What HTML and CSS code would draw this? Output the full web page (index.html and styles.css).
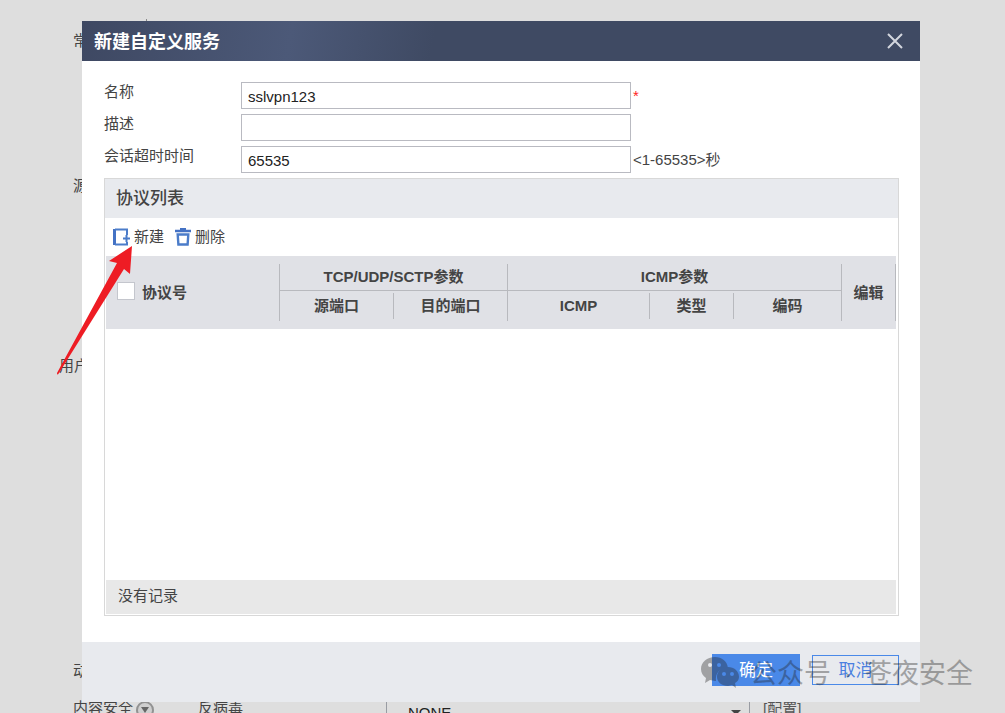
FILE: index.html
```html
<!DOCTYPE html>
<html lang="zh-CN">
<head>
<meta charset="utf-8">
<title>新建自定义服务</title>
<link rel="stylesheet" href="styles.css">
</head>
<body>
<main class="page">
  <div class="page-divider"></div>
  <section class="section section-general">常</section>
  <section class="section section-source">源</section>
  <section class="section section-user">用户</section>
  <section class="section section-action">动</section>
  <section class="security">
    <span class="security-title">内容安全
      <svg class="expand" viewBox="0 0 18 18" aria-hidden="true"><circle cx="9" cy="9" r="8" fill="#cfcfcf" stroke="#929292" stroke-width="2"/><path d="M5 6h8l-4 6z" fill="#666"/></svg>
    </span>
    <label for="antivirus">反病毒</label>
    <span class="select-wrap">
      <select id="antivirus"><option>NONE</option></select>
      <svg class="caret" viewBox="0 0 10 5" aria-hidden="true"><path d="M0 0h10L5 5z" fill="#444"/></svg>
    </span>
    <a class="config" href="#">[配置]</a>
  </section>
</main>

<div class="overlay">
  <div class="dialog" role="dialog" aria-labelledby="dialog-title">
    <header class="dialog-head">
      <h1 id="dialog-title">新建自定义服务</h1>
      <button class="close" type="button" aria-label="关闭">
        <svg viewBox="0 0 16 16" aria-hidden="true"><path d="M1 1l14 14M15 1L1 15" stroke="#d3d6de" stroke-width="2" fill="none"/></svg>
      </button>
    </header>
    <div class="dialog-body">
      <form class="form">
        <label for="name">名称</label>
        <input class="field" id="name" type="text" value="sslvpn123">
        <span class="required">*</span>
        <label for="desc">描述</label>
        <input class="field" id="desc" type="text">
        <span></span>
        <label for="timeout">会话超时时间</label>
        <input class="field" id="timeout" type="text" value="65535">
        <span class="hint">&lt;1-65535&gt;秒</span>
      </form>
      <section class="panel">
        <h2 class="panel-title">协议列表</h2>
        <div class="toolbar">
          <button class="tool" type="button">
            <svg viewBox="0 0 18 18" aria-hidden="true"><path d="M1.500 1v16" stroke="#4472c4" stroke-width="3"/><path d="M14 7V1.500H2M2 16.500H14V14" fill="none" stroke="#4b7cc9" stroke-width="2"/><path d="M10 10.500h7M13.500 7v7" stroke="#4b7cc9" stroke-width="2"/></svg>
            新建
          </button>
          <button class="tool" type="button">
            <svg viewBox="0 0 18 18" aria-hidden="true"><path d="M1 3h16M6 1h6" stroke="#4472c4" stroke-width="2.400" fill="none"/><path d="M3.700 6.500h10.600l-.7 10H4.400z" fill="none" stroke="#4b7cc9" stroke-width="2.400"/></svg>
            删除
          </button>
        </div>
        <div class="table-head">
          <table class="protocols">
            <colgroup><col class="c-protocol"><col class="c-port"><col class="c-port"><col class="c-icmp"><col class="c-type"><col class="c-code"><col class="c-edit"></colgroup>
            <thead>
              <tr class="row-group">
                <th class="protocol" rowspan="2"><label class="check-all"><input type="checkbox"> 协议号</label></th>
                <th class="group" colspan="2">TCP/UDP/SCTP参数</th>
                <th class="group" colspan="3">ICMP参数</th>
                <th class="edit" rowspan="2">编辑</th>
              </tr>
              <tr class="row-sub">
                <th class="sub-first"><span>源端口</span></th>
                <th><span class="split">目的端口</span></th>
                <th class="sub-first"><span>ICMP</span></th>
                <th><span class="split">类型</span></th>
                <th><span class="split">编码</span></th>
              </tr>
            </thead>
          </table>
        </div>
        <div class="rows"></div>
        <p class="empty">没有记录</p>
      </section>
    </div>
    <footer class="dialog-foot">
      <button class="btn btn-primary" type="button">确定</button>
      <button class="btn btn-plain" type="button">取消</button>
    </footer>
  </div>
</div>

<svg class="arrow" viewBox="0 0 80 134" aria-hidden="true"><path d="M76 3L74 31L68 26L3 130Q1 133 1 130L61 20L53 18z" fill="#ee1c24"/></svg>

<div class="watermark">
  <svg viewBox="0 0 38 31" aria-hidden="true"><path fill-rule="evenodd" d="M14 0C6 0 0 5 0 12c0 4 2 7 5 9l-1 5 5-3 5 1h1c-1-8 4-13 12-13C26 4 21 0 14 0zM9 6a2 2 0 1 1 0 4 2 2 0 0 1 0-4zM18 6a2 2 0 1 1 0 4 2 2 0 0 1 0-4z"/><path fill-rule="evenodd" d="M27 10c-6 0-11 4-11 10 0 5 5 9 11 9l4-1 4 3-1-5c2-1 4-3 4-6 0-6-5-10-11-10zM23 15a2 2 0 1 1 0 4 2 2 0 0 1 0-4zM31 15a2 2 0 1 1 0 4 2 2 0 0 1 0-4z"/></svg>
  <span>公众号</span><span class="dot">·</span><span>苍夜安全</span>
</div>
</body>
</html>
```

FILE: styles.css
```css
* { box-sizing: border-box; }

body {
  margin: 0;
  background: #dedede;
  color: #444;
  font: 15px/20px "Liberation Sans", "Noto Sans CJK SC", sans-serif;
}

button, input, select { font: inherit; }

.page {
  height: 100vh;
  min-height: 713px;
  padding: 19px 0 0 73px;
  overflow: hidden;
}
.page-divider {
  width: 74px;
  height: 12px;
  border-right: 1px solid #888;
}
.section-general { min-height: 145px; }
.section-source { min-height: 180px; }
.section-user { min-height: 305px; margin-left: -14px; }
.section-action { min-height: 37px; }
.security {
  display: grid;
  grid-template-columns: 125px 188px minmax(0, 364px) auto;
}
.security-title { display: flex; gap: 3px; }
.expand { width: 18px; height: 18px; margin-top: 3px; }
.select-wrap { position: relative; }
.select-wrap select {
  appearance: none;
  width: 100%;
  height: 30px;
  padding: 0 21px;
  border: 1px solid #999ca3;
  border-radius: 0;
  background: transparent;
  color: #222;
}
.caret {
  position: absolute;
  right: 9px;
  top: 12px;
  width: 10px;
  height: 5px;
}
.config { margin-left: 13px; padding-top: 1px; color: #555; text-decoration: none; }

.overlay {
  position: absolute;
  top: 0;
  left: 0;
  right: 0;
  padding: 21px 85px 0 82px;
}
.dialog { background: #fff; }
.dialog-head {
  display: flex;
  align-items: center;
  justify-content: space-between;
  height: 40px;
  padding: 0 17px 0 12px;
  background: linear-gradient(100deg, #3e4862 0, #4c5978 25%, #3f4a63 42%);
}
.dialog-head h1 {
  margin: 0;
  padding-top: 2px;
  color: #fff;
  font-size: 18px;
  line-height: 24px;
}
.close {
  display: flex;
  padding: 0;
  border: 0;
  background: none;
}
.close svg { width: 16px; height: 16px; }

.dialog-body { padding: 21px 21px 26px 22px; }
.form {
  display: grid;
  grid-template-columns: 137px minmax(0, 390px) auto;
  grid-auto-rows: 27px;
  gap: 5px 0;
  justify-content: start;
  margin: 0 0 5px;
}
.field {
  width: 100%;
  padding: 2px 6px 0;
  border: 1px solid #b9bac1;
  border-radius: 0;
  background: #fff;
  color: #222;
}
.required { padding: 4px 2px; color: #f22; }
.hint { padding: 4px 2px; }

.panel {
  border: 1px solid #d8d8d8;
  padding: 0 2px 1px 1px;
}
.panel-title {
  margin: 0 -2px 0 -1px;
  padding: 8px 11px 7px;
  background: #e8eaee;
  font-size: 17px;
  font-weight: 500;
  line-height: 24px;
}
.toolbar {
  display: flex;
  gap: 10px;
  height: 38px;
  padding-left: 7px;
}
.tool {
  display: flex;
  align-items: center;
  gap: 3px;
  padding: 0;
  border: 0;
  background: none;
  color: #444;
}
.tool svg { width: 18px; height: 18px; }

.table-head { padding: 8px 0; background: #e0e1e6; }
.protocols {
  width: 100%;
  table-layout: fixed;
  border-spacing: 0;
}
.c-protocol { width: 173px; }
.c-port { width: 114px; }
.c-icmp { width: 142px; }
.c-type { width: 84px; }
.c-code { width: 108px; }
.c-edit { width: 55px; }
.protocols th { padding: 0; font-weight: 700; }
.row-group { height: 27px; }
.row-sub { height: 30px; }
.protocols .group {
  border-left: 1px solid #b8b9be;
  border-bottom: 1px solid #b8b9be;
}
.protocols .sub-first { border-left: 1px solid #b8b9be; }
.protocols .edit {
  border-left: 1px solid #b8b9be;
  border-right: 1px solid #b8b9be;
}
.row-sub span { display: block; line-height: 26px; }
.row-sub .split { border-left: 1px solid #b8b9be; }
.check-all {
  display: flex;
  align-items: center;
  gap: 7px;
  padding-left: 11px;
}
.check-all input {
  appearance: none;
  width: 18px;
  height: 18px;
  margin: 0 0 4px;
  border: 1px solid #c4c6cd;
  background: #fff;
}
.rows { min-height: 251px; }
.empty {
  margin: 0;
  padding: 6px 12px 8px;
  background: #e8e8e8;
}

.dialog-foot {
  display: flex;
  justify-content: flex-end;
  gap: 12px;
  padding: 12px 21px 16px;
  background: #e8eaee;
}
.btn {
  padding: 2px 0 0;
  border: 1px solid #4a89e8;
  font-size: 17px;
}
.btn-primary {
  width: 88px;
  height: 32px;
  background: #4a89e8;
  color: #fff;
}
.btn-plain {
  width: 87px;
  height: 30px;
  margin-top: 1px;
  background: transparent;
  color: #4a7fe0;
}

.arrow {
  position: absolute;
  left: 56px;
  top: 243px;
  width: 80px;
  height: 134px;
}
.watermark {
  position: absolute;
  left: 701px;
  top: 657px;
  display: flex;
  align-items: flex-start;
  color: #222;
  font-size: 27px;
  line-height: 34px;
  white-space: nowrap;
  opacity: 0.36;
  pointer-events: none;
}
.watermark svg {
  width: 38px;
  height: 31px;
  margin-right: 11px;
  fill: currentColor;
}
.dot { width: 34px; text-align: center; }
```
